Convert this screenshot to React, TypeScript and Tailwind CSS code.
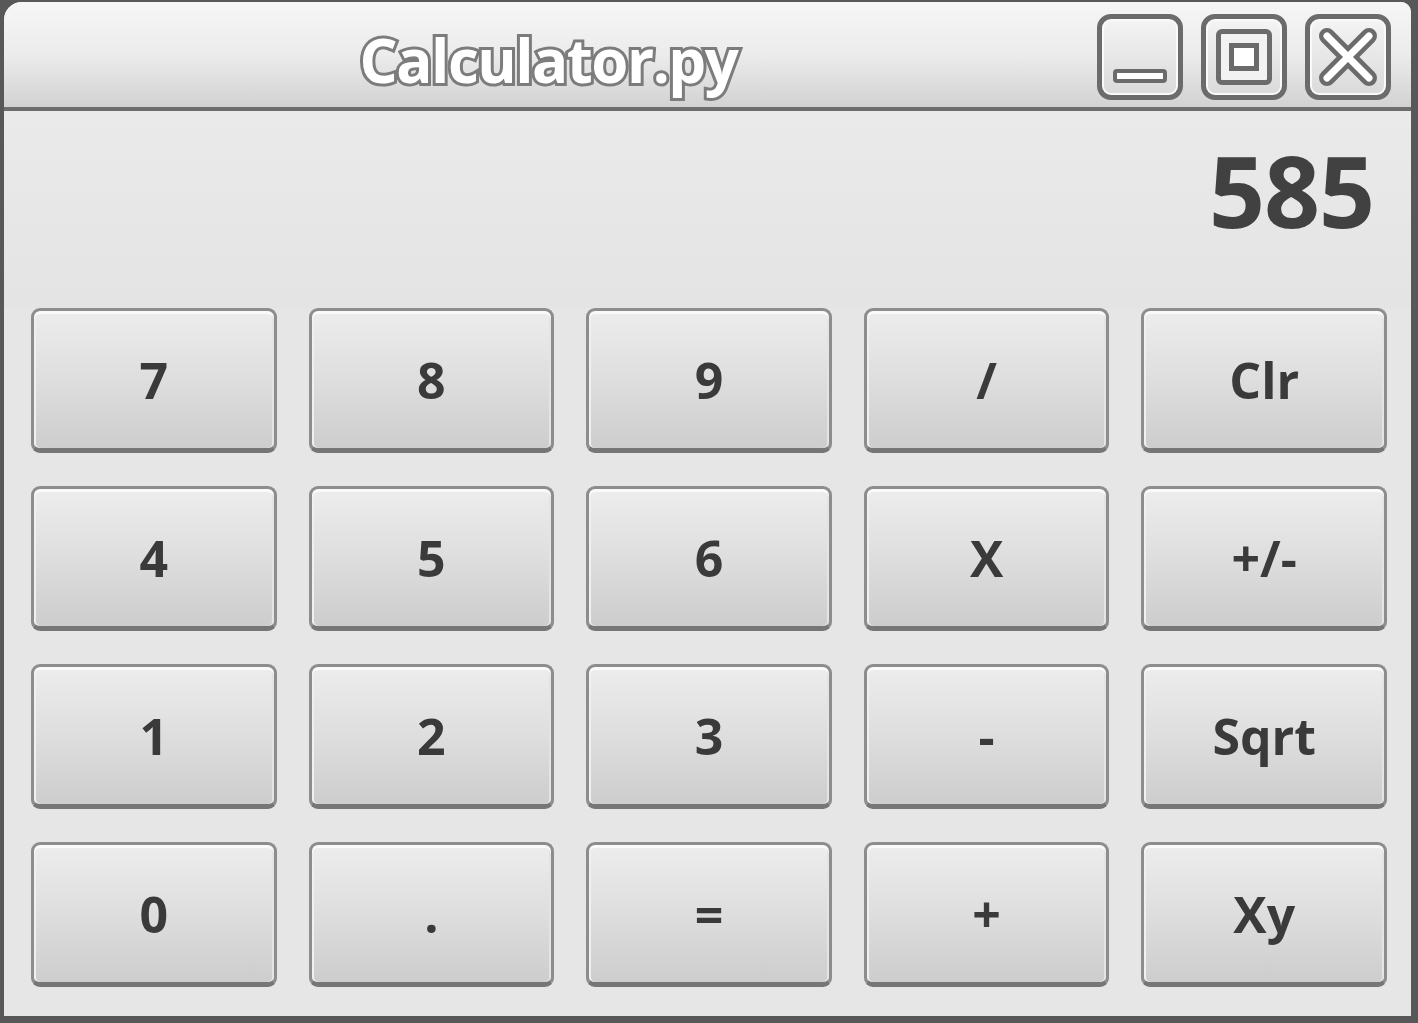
const keys = ['7', '8', '9', '/', 'Clr', '4', '5', '6', 'X', '+/-', '1', '2', '3', '-', 'Sqrt', '0', '.', '=', '+', 'Xy'];

function WinButton({ children }: { children: React.ReactNode }) {
  return (
    <div className="w-[86px] h-[86px] rounded-[14px] border-[5px] border-[#6b6b6b] bg-gradient-to-b from-[#f4f4f4] to-[#dadada] shadow-[inset_0_0_0_2px_#fafafa] flex items-center justify-center">
      {children}
    </div>
  );
}

export default function App() {
  return (
    <div className="w-[1418px] h-[1023px] bg-[#585858] pl-[4px] pr-[7px] pb-[7px] pt-[2px] font-['Open_Sans',sans-serif] overflow-hidden">
      <div className="w-full h-full flex flex-col rounded-tl-[18px] rounded-tr-[10px] overflow-hidden bg-[#e6e6e6]">
        {/* title bar */}
        <div className="h-[109px] shrink-0 flex items-center bg-gradient-to-b from-[#f6f6f6] via-[#ececec] to-[#d2d2d2] border-b-[4px] border-[#6e6e6e]">
          <div className="flex-1 flex justify-center pr-[4px]">
            <span className="text-[60px] font-bold tracking-[-1.5px] text-white [-webkit-text-stroke:6px_#7c7c7c] [paint-order:stroke_fill] leading-none pt-[10px]">
              Calculator.py
            </span>
          </div>
          <div className="flex gap-[18px] pr-[20px] pt-[4px]">
            <WinButton>
              <div className="w-[54px] h-[14px] mt-[38px] rounded-[4px] border-[4px] border-[#6b6b6b] bg-white" />
            </WinButton>
            <WinButton>
              <div className="w-[56px] h-[56px] border-[5px] border-[#6b6b6b] rounded-[6px] flex items-center justify-center bg-[#f2f2f2]">
                <div className="w-[30px] h-[28px] border-[5px] border-[#6b6b6b] bg-white" />
              </div>
            </WinButton>
            <WinButton>
              <svg width="62" height="62" viewBox="0 0 62 62">
                <path d="M10 10 L52 52 M52 10 L10 52" stroke="#6b6b6b" strokeWidth="16" strokeLinecap="round" />
                <path d="M10 10 L52 52 M52 10 L10 52" stroke="#ffffff" strokeWidth="7" strokeLinecap="round" />
              </svg>
            </WinButton>
          </div>
        </div>

        {/* display */}
        <div className="h-[197px] shrink-0 flex justify-end items-start pr-[37px] pt-[30px] bg-gradient-to-b from-[#eaeaea] to-[#e4e4e4]">
          <span className="text-[98px] font-bold leading-none text-[#414141] tracking-[-1px]">585</span>
        </div>

        {/* keypad */}
        <div className="grid grid-cols-5 grid-rows-[repeat(4,145px)] gap-x-[32px] gap-y-[33px] pl-[27px] pr-[24px]">
          {keys.map((k) => (
            <button
              key={k}
              className="h-[145px] rounded-[9px] border-[3px] border-[#8d8d8d] border-b-[5px] border-b-[#767676] bg-gradient-to-b from-[#ededed] via-[#dedede] to-[#cdcdcd] shadow-[inset_0_3px_0_#fafafa,inset_2px_0_0_#f0f0f0,inset_-2px_0_0_#e4e4e4] flex items-center justify-center text-[50px] font-bold text-[#3a3a3a] leading-none"
            >
              {k}
            </button>
          ))}
        </div>
      </div>
    </div>
  );
}
